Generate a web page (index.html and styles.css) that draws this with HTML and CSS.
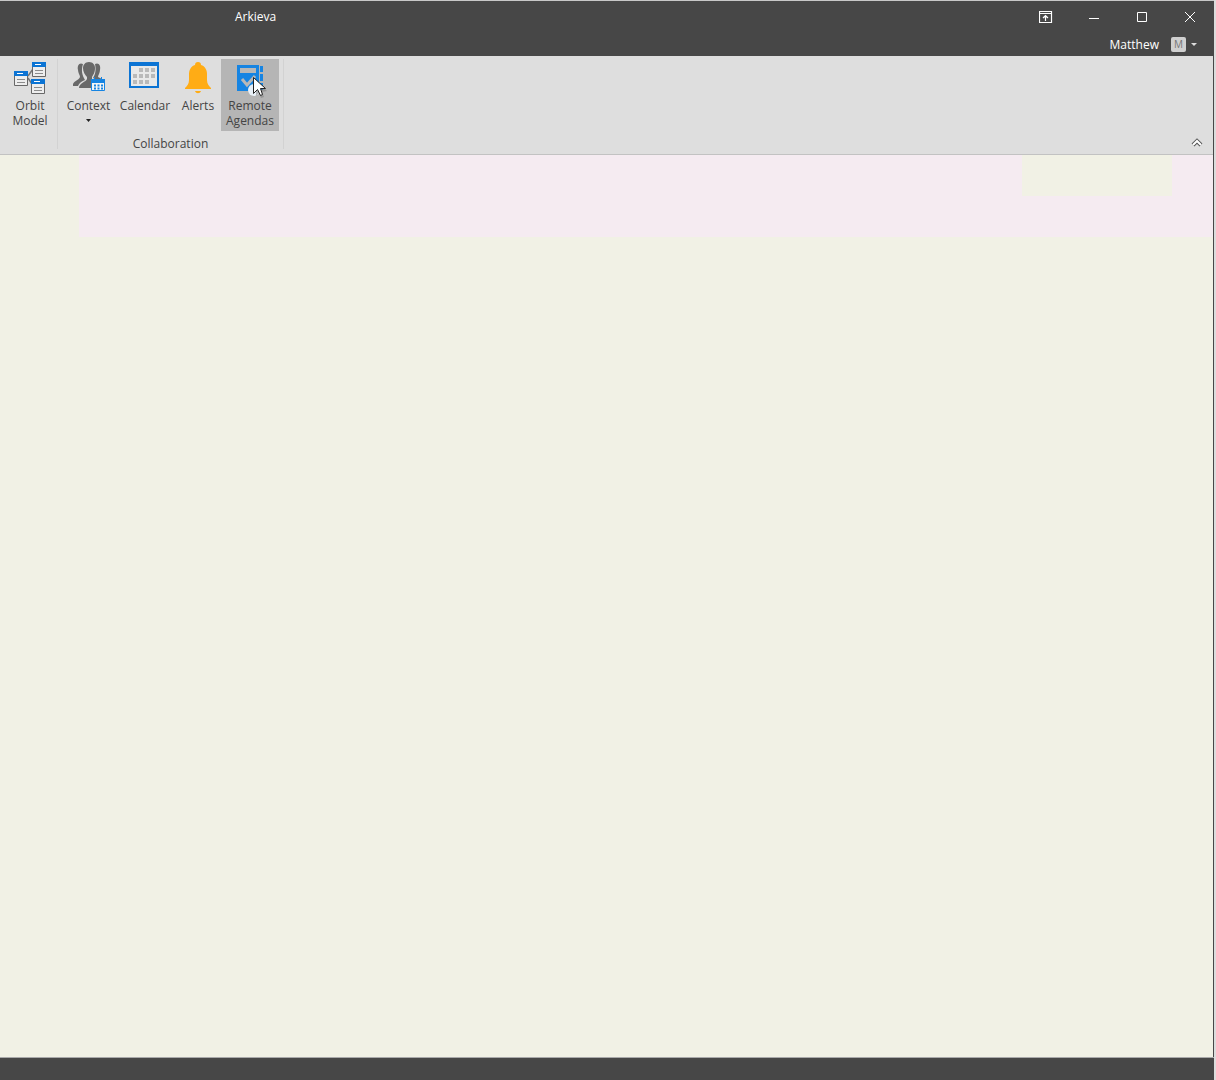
FILE: index.html
```html
<!DOCTYPE html>
<html lang="en">
<head>
<meta charset="utf-8">
<title>Arkieva</title>
<link rel="stylesheet" href="styles.css">
</head>
<body>
<div class="window">
  <header class="titlebar">
    <h1 class="title">Arkieva</h1>
    <div class="window-controls">
      <button class="control" aria-label="Ribbon display options"><svg width="14" height="12" viewBox="0 0 14 12" fill="none" stroke="#fff"><path d="M.5.5h12v11H.5zM0 2.500h13M6.500 10V4.500M4 7l2.500-2.500L9 7" stroke-width="1.200"/></svg></button>
      <button class="control" aria-label="Minimize"><svg width="12" height="12" viewBox="0 0 12 12" stroke="#fff"><path d="M1 7.500h10"/></svg></button>
      <button class="control" aria-label="Maximize"><svg width="12" height="12" viewBox="0 0 12 12" fill="none" stroke="#fff"><path d="M1.500 1.500h9v9h-9z"/></svg></button>
      <button class="control" aria-label="Close"><svg width="12" height="12" viewBox="0 0 12 12" stroke="#fff"><path d="m1 1 10 10M11 1 1 11"/></svg></button>
    </div>
  </header>
  <div class="account-row">
    <button class="account"><span>Matthew</span><span class="avatar">M</span><svg width="6" height="3" viewBox="0 0 6 3"><path d="M0 0h6L3 3z" fill="#ddd"/></svg></button>
  </div>
  <nav class="ribbon" aria-label="Ribbon">
    <section class="group">
      <div class="tools">
        <button class="tool orbit">
          <svg width="32" height="32" viewBox="0 0 32 32"><path d="M14 14 19 7M14 16l4 6" fill="none" stroke="#777" stroke-width="1.500"/><g fill="#eee" stroke="#686868"><path d="M.5 9.500h13v14H.5zM18.500.5h13v14h-13zM17.500 17.500h13v14h-13z"/></g><path d="M0 9h14v5H0zM18 0h14v5H18zM17 17h14v5H17z" fill="#0c74d4"/><path d="M3 11.500h6M21 2.500h6M20 19.500h6" stroke="#fff"/><path d="M3 17.500h8M3 20.500h8M21 8.500h8M21 11.500h8M20 25.500h8M20 28.500h8" stroke="#8c8c8c"/></svg>
          <span>Orbit<br>Model</span>
        </button>
      </div>
    </section>
    <section class="group">
      <div class="tools">
        <button class="tool context">
          <svg width="32" height="32" viewBox="0 0 32 32"><g fill="#696969"><path d="M10 2C6 0 4 4 5 8c0 3 2 5 2 7-1 3-6 4-7 7v2h5c1-3 4-5 7-6-3-5-4-10-2-16zM22 2c4-2 6 2 5 6 0 3-2 5-2 7l4 2h-7l-2-1c3-5 3-9 2-14z"/><path d="M16 0c4 0 6 3 6 6 0 5-2 7-3 9v3h-1v8H6c0-5 7-6 8-9v-2c-2-2-4-5-4-9 0-3 2-6 6-6z"/></g><path d="M18.500 17.500h13v11h-13z" fill="#f4f4f4" stroke="#1684e2"/><path d="M18 17h14v4H18z" fill="#1684e2"/><path d="M21.500 15v4M28.500 15v4" stroke="#1684e2"/><path d="M21 23.500h9M21 26.500h9" stroke="#1684e2" stroke-width="2" stroke-dasharray="2 1.500"/></svg>
          <span>Context</span>
          <svg class="menu-arrow" width="5" height="3" viewBox="0 0 5 3"><path d="M0 0h5L2.500 3z" fill="#222"/></svg>
        </button>
        <button class="tool calendar">
          <svg width="32" height="32" viewBox="0 0 32 32"><path d="M1 1h28v24H1z" fill="#e9e9e9" stroke="#0c74d4" stroke-width="2"/><path d="M0 0h30v4H0z" fill="#0c74d4"/><path d="M10 6h4v4h-4zM16 6h4v4h-4zM22 6h4v4h-4zM4 12h4v4H4zM10 12h4v4h-4zM16 12h4v4h-4zM22 12h4v4h-4zM4 18h4v4H4zM10 18h4v4h-4zM16 18h4v4h-4z" fill="#bababa"/></svg>
          <span>Calendar</span>
        </button>
        <button class="tool alerts">
          <svg width="32" height="32" viewBox="0 0 32 32"><path d="M16 0c2 0 3 1 3 3 4 1 6 5 6 9v6c0 4 2 6 4 8v1H3v-1c2-2 4-4 4-8v-6c0-4 2-8 6-9 0-2 1-3 3-3zM13 29h6c-1 3-5 3-6 0z" fill="#ffac15"/></svg>
          <span>Alerts</span>
        </button>
        <button class="tool agendas selected">
          <svg width="32" height="32" viewBox="0 0 32 32"><path d="M3 3h22v26H3z" fill="#1684e2"/><path d="M6 6h16v5H6z" fill="#b8b8b8"/><path d="M26 4h3v6h-3zM26 12h3v7h-3zM26 21h3v7h-3z" fill="#1684e2"/><path d="m8 17 5 6 8-9" fill="none" stroke="#b8b8b8" stroke-width="3"/></svg>
          <span>Remote<br>Agendas</span>
          <svg class="cursor" width="22" height="24" viewBox="0 0 22 24"><circle cx="6" cy="14" r="6" fill="#e8f0f7"/><path d="m8 4 11 11-5 1 2 5-3 1-2-5-3 3z" fill="#777" opacity=".5"/><path d="M5.500 1.500v16l4-4 3 6 2-1-2-6h5z" fill="#fff" stroke="#222"/></svg>
        </button>
      </div>
      <h2 class="caption">Collaboration</h2>
    </section>
    <button class="collapse" aria-label="Collapse ribbon"><svg width="12" height="9" viewBox="0 0 12 9"><path d="m2 7 4-4 4 4" fill="none" stroke="#555" stroke-width="4"/><path d="m2 7 4-4 4 4" fill="none" stroke="#fff" stroke-width="2"/></svg></button>
  </nav>
  <main class="workspace"><div class="band"><div class="band-gap"></div></div></main>
  <footer class="statusbar"></footer>
</div>
</body>
</html>
```
FILE: styles.css
```css
* { box-sizing: border-box; }
body { margin: 0; background: #dcdcdc; font: 12px/15px "Open Sans", "Noto Sans", sans-serif; color: #444; }
button { font: inherit; color: inherit; background: none; border: 0; padding: 0; }
svg { display: block; flex: none; }
h1, h2 { margin: 0; font: inherit; }
.window { min-height: 100vh; margin-right: 2px; border-top: 1px solid #c8c8c8; display: flex; flex-direction: column; background: #474747; }
.titlebar { height: 32px; display: flex; justify-content: space-between; color: #fff; }
.title { padding: 8px 0 0 235px; font-size: 12px; }
.window-controls { display: flex; }
.control { width: 48px; display: grid; place-items: center; }
.account-row { height: 23px; display: flex; justify-content: flex-end; padding-right: 17px; color: #fff; }
.account { display: flex; align-items: center; }
.avatar { width: 15px; height: 15px; margin: 0 5px 0 12px; border-radius: 2px; background: #d0d0d0; color: #777; font-size: 10px; text-align: center; }
.ribbon { height: 99px; display: flex; background: #dedede; border-bottom: 1px solid #c2c2c2; padding-top: 3px; margin-right: 1px; }
.group { height: 90px; border-right: 1px solid #d2d2d2; padding: 0 4px; }
.group:first-child { padding: 0 2px 0 5px; }
.tools { display: flex; height: 72px; }
.tool { position: relative; display: flex; flex-direction: column; align-items: center; padding-top: 3px; }
.tool > span { margin-top: 4px; }
.orbit { width: 50px; }
.context { width: 53px; }
.calendar { width: 60px; }
.alerts { width: 46px; }
.agendas { width: 58px; }
.selected { background: #b5b5b5; }
.menu-arrow { margin-top: 6px; }
.cursor { position: absolute; left: 27px; top: 17px; }
.caption { margin-top: 5px; text-align: center; }
.collapse { margin: auto 10px 7px auto; }
.workspace { flex: 1; background: #f1f1e5; border-right: 1px solid #474747; }
.band { height: 82px; margin-left: 79px; background: #f5ebf1; display: flex; justify-content: flex-end; padding-right: 41px; }
.band-gap { width: 150px; height: 41px; background: #f1f1e5; }
.statusbar { height: 23px; background: #474747; border-top: 1px solid #aaa; }
```
